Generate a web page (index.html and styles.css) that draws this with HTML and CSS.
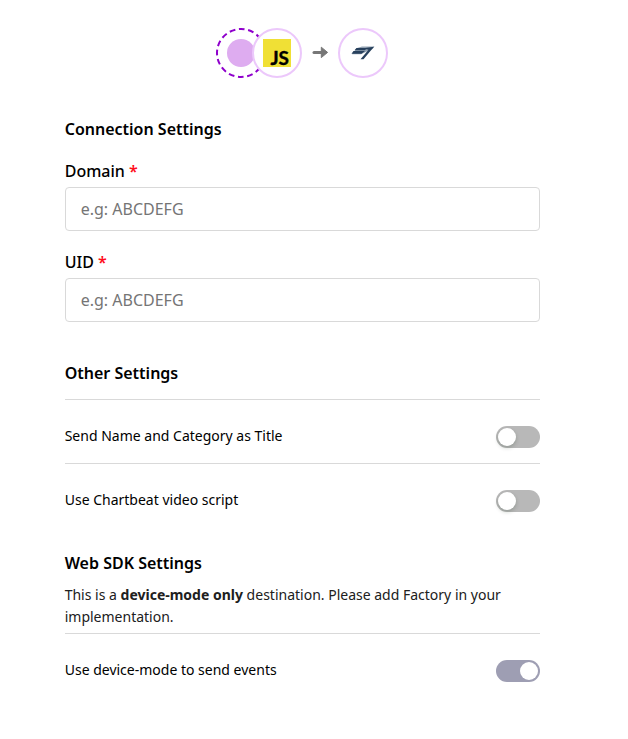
FILE: index.html
```html
<!DOCTYPE html>
<html lang="en">
<head>
<meta charset="utf-8">
<title>Connection Settings</title>
<link rel="stylesheet" href="styles.css">
</head>
<body>
<main class="page">
  <header class="flow">
    <svg class="flow-art" width="174" height="52" viewBox="215 27 174 52" aria-hidden="true">
      <circle class="ring-dashed" cx="241" cy="53" r="24"/>
      <circle class="dot" cx="241" cy="53" r="14"/>
      <circle class="ring" cx="277" cy="53" r="24"/>
      <rect class="js-tile" x="263" y="39" width="28" height="28"/>
      <text class="js-text" x="270.5" y="64.5" textLength="18.5" lengthAdjust="spacingAndGlyphs">JS</text>
      <path class="arrow-line" d="M314 52.4H323"/>
      <path class="arrow-head" d="M321.3 47.2L327.6 52.4L321.3 57.6Z"/>
      <circle class="ring" cx="363" cy="53" r="24"/>
      <path class="mark-light" d="M362 46.5H374.5L372.5 49L368 51L361 54.3H352L357 48Z"/>
      <path class="mark-dark" d="M356.5 48H367L365 50.2H354.5ZM353.5 51H365L361.5 53.8H351.5ZM363.5 48.3L374 46.8L363.5 59.3H360.5L368.5 49.8Z"/>
    </svg>
  </header>
  <section class="connection">
    <h2>Connection Settings</h2>
    <label for="domain">Domain <span class="required">*</span></label>
    <input id="domain" placeholder="e.g: ABCDEFG">
    <label class="next" for="uid">UID <span class="required">*</span></label>
    <input id="uid" placeholder="e.g: ABCDEFG">
  </section>
  <section class="other">
    <h2>Other Settings</h2>
    <div class="row"><span class="row-label">Send Name and Category as Title</span><span class="switch"></span></div>
    <div class="row"><span class="row-label">Use Chartbeat video script</span><span class="switch"></span></div>
  </section>
  <section class="sdk">
    <h2>Web SDK Settings</h2>
    <p>This is a <b>device-mode only</b> destination. Please add Factory in your implementation.</p>
    <div class="row"><span class="row-label">Use device-mode to send events</span><span class="switch on"></span></div>
  </section>
</main>
</body>
</html>
```
FILE: styles.css
```css
* { box-sizing: border-box; }
body { margin: 0; background: #fff; color: #000; font-family: "Noto Sans", sans-serif; }
.page { width: 475.3px; margin-left: 64.7px; padding-top: 27px; }
.flow { display: flex; padding-left: 150.3px; height: 52px; }
.flow-art { display: block; flex: none; }
.ring, .ring-dashed { fill: #fff; stroke: #ecc8fb; stroke-width: 2; }
.ring-dashed { stroke: #8f00cc; stroke-dasharray: 5.8 3.625; stroke-dashoffset: 2.9; }
.dot { fill: #deacf0; }
.js-tile { fill: #f0e035; }
.js-text { font: 700 18px Lato, sans-serif; stroke: #000; stroke-width: .4; }
.arrow-line { fill: none; stroke: #777; stroke-width: 3; stroke-linecap: round; }
.arrow-head { fill: #777; stroke: #777; stroke-width: 1; stroke-linejoin: round; }
.mark-light { fill: #94a3b3; }
.mark-dark { fill: #27405c; }
h2 { margin: 0; font-size: 16px; line-height: 24px; font-weight: 600; }
.connection { padding-top: 38px; }
label { display: block; margin-top: 18px; font-size: 16px; line-height: 24px; font-weight: 500; }
label.next { margin-top: 19px; }
.required { color: #ff0d1a; font-weight: 600; }
input { display: block; width: 100%; height: 44px; margin-top: 4px; padding: 0 15px; border: 1px solid #d9d9d9; border-radius: 4px; font: 16px "Noto Sans", sans-serif; }
input::placeholder { color: #757575; opacity: 1; }
.other { padding-top: 39px; }
.other h2 { margin-bottom: 14px; }
.row { display: flex; justify-content: space-between; align-items: center; height: 64px; padding-top: 10px; border-top: 1px solid #d9d9d9; font-size: 14px; line-height: 22px; }
.row-label { padding-bottom: 2px; }
.switch { display: flex; align-items: center; width: 44px; height: 22px; padding: 0 2px; border-radius: 11px; background: #b8b8b8; }
.switch::after { content: ""; width: 18px; height: 18px; border-radius: 50%; background: #fff; box-shadow: 0 2px 4px rgba(0,35,11,.2); }
.switch.on { justify-content: flex-end; background: #9e9eb3; }
.switch.on::after { box-shadow: none; }
.sdk { padding-top: 24px; }
.sdk p { margin: 9px 0 5px; font-size: 14px; line-height: 22px; color: #202020; }
```
